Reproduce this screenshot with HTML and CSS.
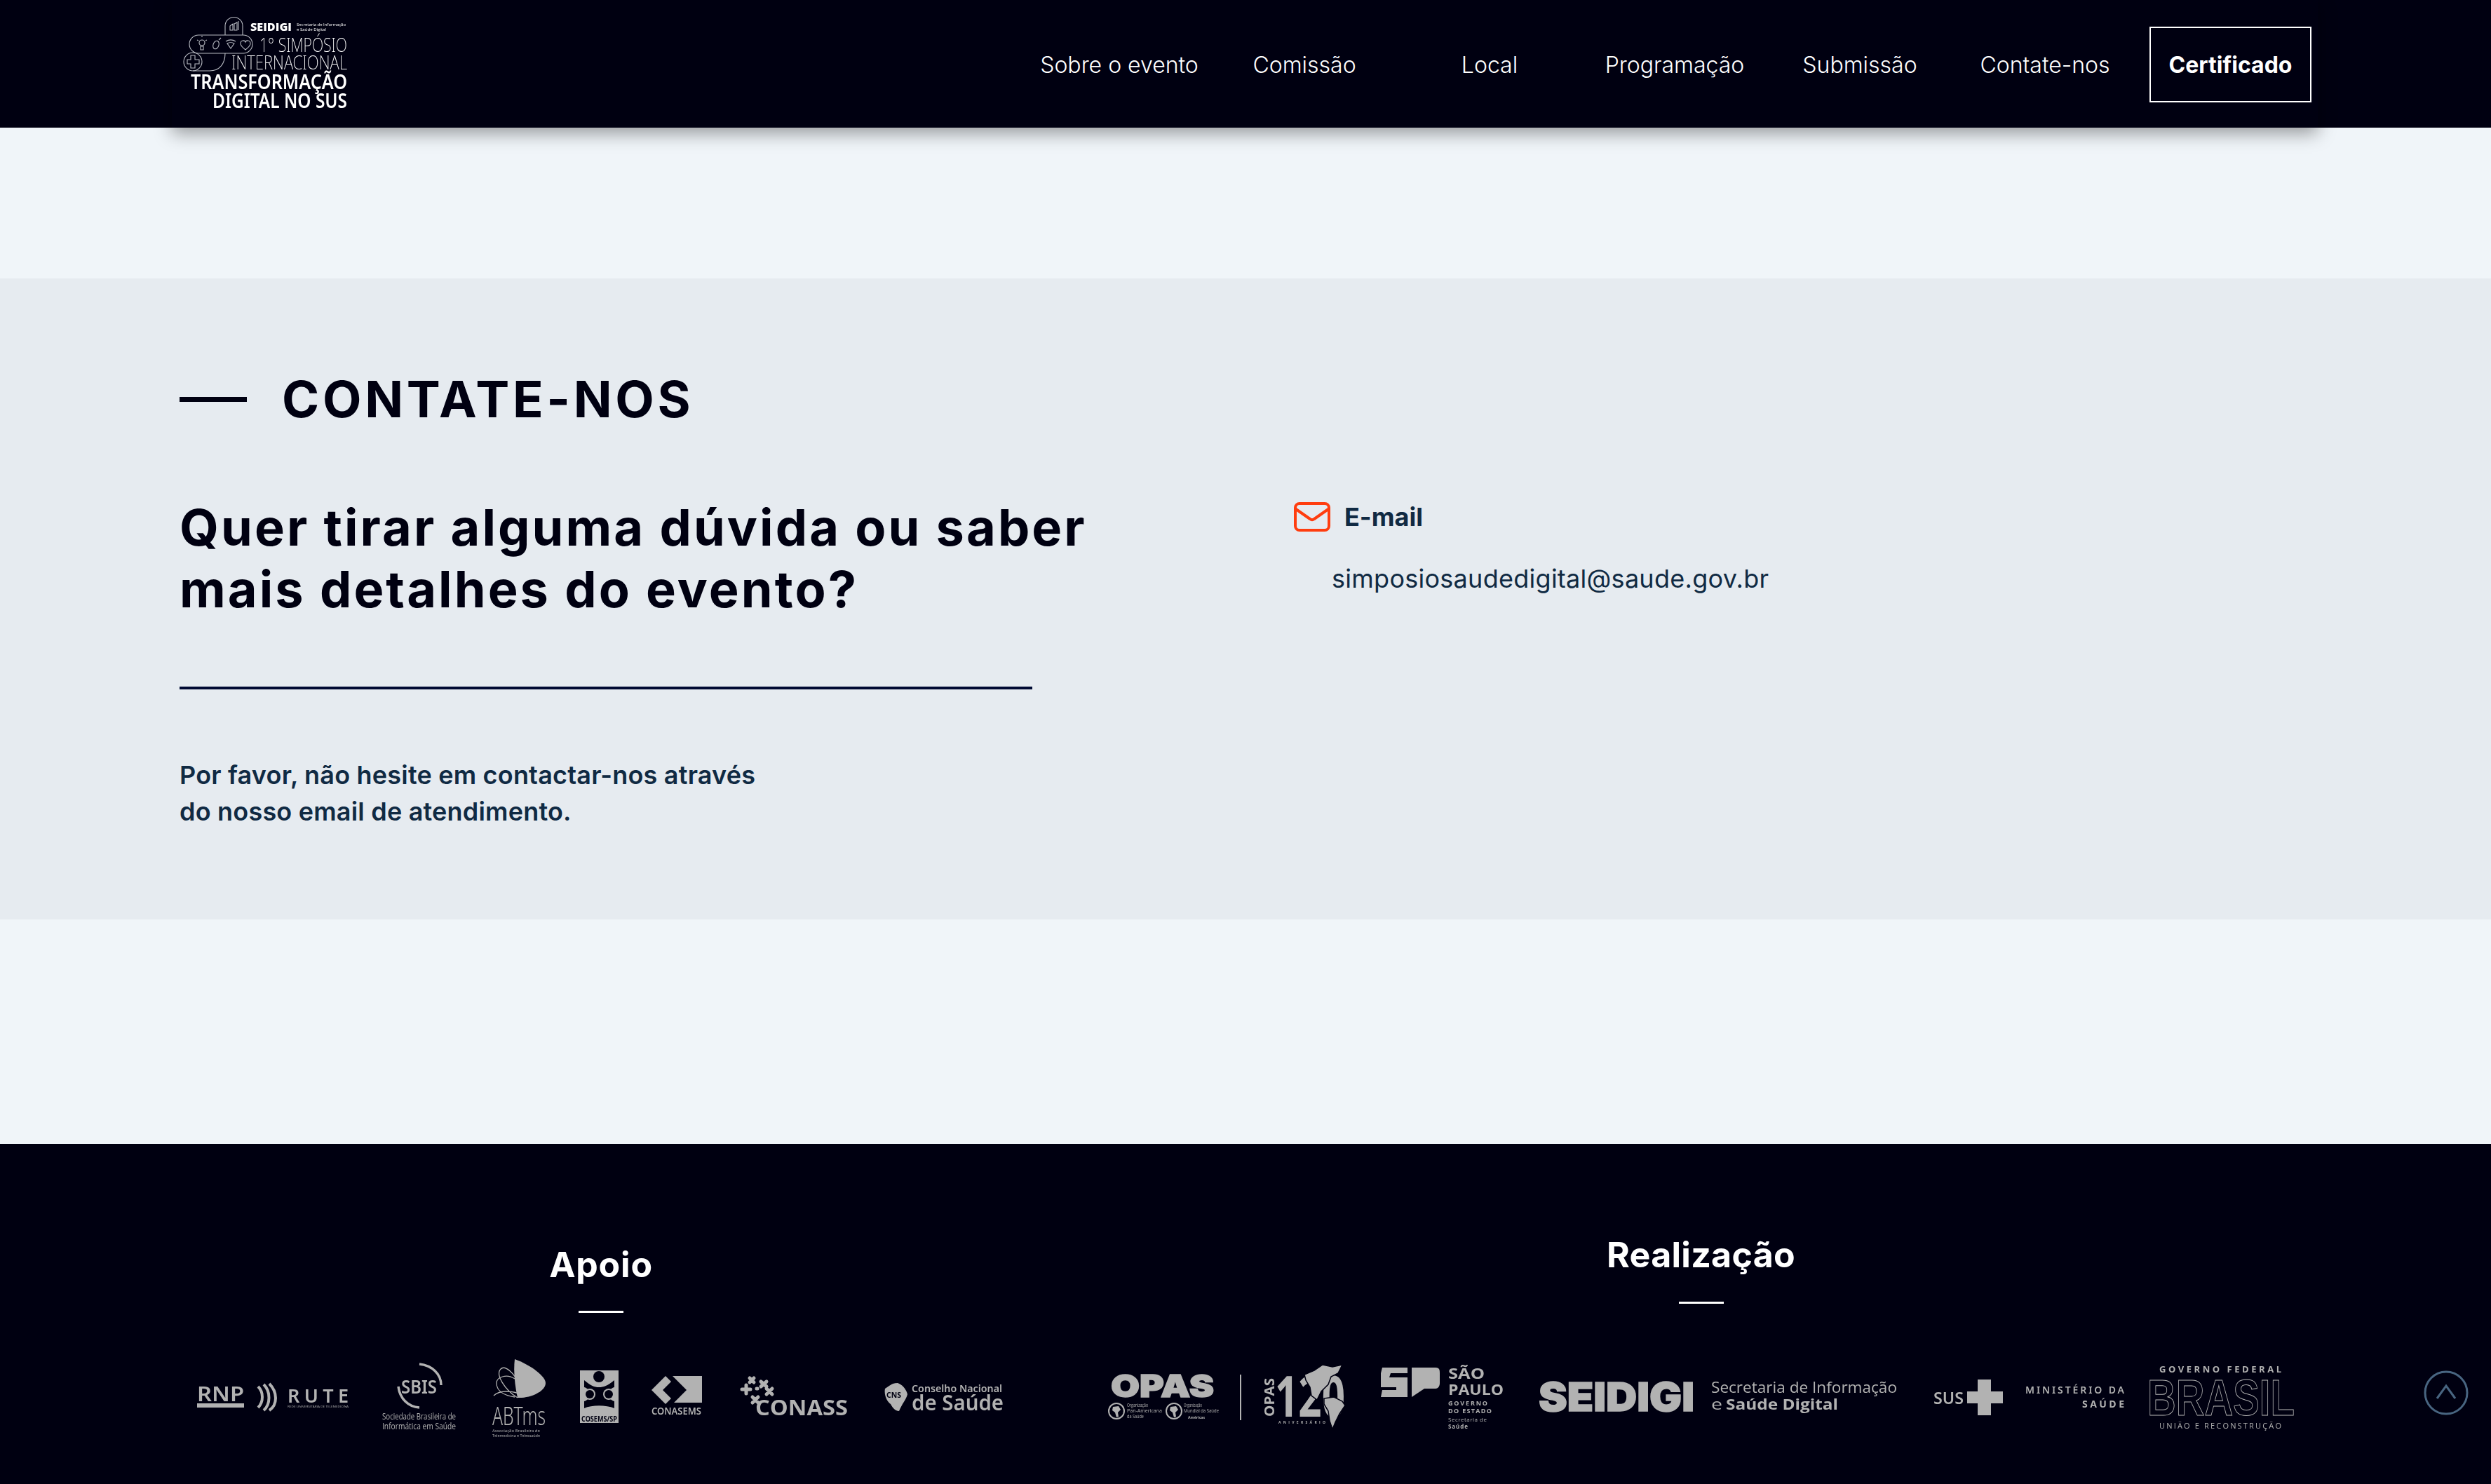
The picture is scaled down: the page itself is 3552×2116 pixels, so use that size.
FILE: index.html
```html
<!DOCTYPE html>
<html lang="pt-BR">
<head>
    <meta charset="UTF-8">
    <meta name="viewport" content="width=device-width, initial-scale=1.0">
    <title>1º Simpósio Internacional - Contate-nos</title>
    <link rel="stylesheet" href="styles.css">
</head>
<body>
    <header class="site-header">
        <div class="header-inner">
            <a class="brand" href="#">
                <svg class="brand-logo" width="240" height="145" viewBox="0 0 240 145">
                    <g fill="none" stroke="#b9bcc4" stroke-width="1.100">
                        <path d="M63 31V18a12.500 12.500 0 0 1 25 0v13"/>
                        <rect x="12" y="31" width="90" height="26" rx="13"/>
                        <circle cx="17" cy="69" r="13"/>
                        <path d="M17 82h24c14 0 22-10 22-25"/>
                        <path d="M70 24v-6l4-3v9zM76 24v-9l4-2v11zM82 24V11"/>
                        <circle cx="30" cy="42" r="4"/>
                        <path d="M28 47h4v5h-4zM23 38l2 1M37 38l-2 1M30 34v-2"/>
                        <ellipse cx="50" cy="45" rx="4" ry="6" transform="rotate(20 50 45)"/>
                        <path d="M54 38l3-3"/>
                        <path d="M64 40c5-3 9-3 14 0M66 43c4-2 6-2 10 0l-5 7z"/>
                        <path d="M85 43c0-5 6-5 7-2 1-3 7-3 7 2 0 4-4 6-7 9-3-3-7-5-7-9z"/>
                        <path d="M14 60h6v6h6v6h-6v6h-6v-6H9v-6h5z"/>
                    </g>
                    <text class="brand-seidigi" x="99" y="25" textLength="59" lengthAdjust="spacingAndGlyphs">SEIDIGI</text>
                    <text class="brand-small" x="165" y="18" textLength="70" lengthAdjust="spacingAndGlyphs">Secretaria de Informação</text>
                    <text class="brand-small" x="165" y="25" textLength="42" lengthAdjust="spacingAndGlyphs">e Saúde Digital</text>
                    <text class="brand-light" x="112" y="55" textLength="125" lengthAdjust="spacingAndGlyphs">1° SIMPÓSIO</text>
                    <text class="brand-light" x="72" y="80" textLength="165" lengthAdjust="spacingAndGlyphs">INTERNACIONAL</text>
                    <text class="brand-bold" x="14" y="108" textLength="223" lengthAdjust="spacingAndGlyphs">TRANSFORMAÇÃO</text>
                    <text class="brand-bold" x="45" y="135" textLength="192" lengthAdjust="spacingAndGlyphs">DIGITAL NO SUS</text>
                </svg>
            </a>
            <nav class="main-nav">
                <a class="nav-link" href="#">Sobre o evento</a>
                <a class="nav-link" href="#">Comissão</a>
                <a class="nav-link" href="#">Local</a>
                <a class="nav-link" href="#">Programação</a>
                <a class="nav-link" href="#">Submissão</a>
                <a class="nav-link" href="#">Contate-nos</a>
                <a class="nav-button" href="#">Certificado</a>
            </nav>
        </div>
    </header>

    <main>
        <section class="contact">
            <h2 class="section-title"><span class="title-dash"></span>CONTATE-NOS</h2>
            <div class="contact-grid">
                <div class="contact-left">
                    <h3 class="contact-question">Quer tirar alguma dúvida ou saber<br>mais detalhes do evento?</h3>
                    <hr class="contact-rule">
                    <p class="contact-text">Por favor, não hesite em contactar-nos através<br>do nosso email de atendimento.</p>
                </div>
                <div class="contact-right">
                    <div class="email-label">
                        <svg class="email-icon" width="52" height="42" viewBox="0 0 52 42" fill="none" stroke="#ff3d0f" stroke-width="4" stroke-linecap="round" stroke-linejoin="round">
                            <rect x="2" y="2" width="48" height="38" rx="6"/>
                            <path d="M3 10l20 14c2 1.500 4 1.500 6 0l20-14"/>
                        </svg>
                        <span>E-mail</span>
                    </div>
                    <p class="email-address">simposiosaudedigital@saude.gov.br</p>
                </div>
            </div>
        </section>
    </main>

    <footer class="site-footer">
        <div class="footer-col">
            <h4 class="footer-title">Apoio</h4>
            <div class="logo-row">
                <svg class="logo" width="216" height="130" viewBox="0 0 216 130">
                    <text class="lg-cond" x="-1" y="68" font-size="29" textLength="67" lengthAdjust="spacingAndGlyphs">RNP</text>
                    <rect x="-1" y="71" width="67" height="6"/>
                    <path class="lg-line" stroke-width="4" d="M86 47c8 8 8 22 0 30M94 44c10 10 10 28 0 37M102 43c12 12 12 30 0 38"/>
                    <text class="lg-cond" x="128" y="70" font-size="27" textLength="87" lengthAdjust="spacing">RUTE</text>
                    <text class="lg-reg" x="128" y="77" font-size="4" textLength="87" lengthAdjust="spacingAndGlyphs">REDE UNIVERSITÁRIA DE TELEMEDICINA</text>
                </svg>
                <svg class="logo" width="110" height="130" viewBox="0 0 110 130">
                    <path class="lg-line" stroke-width="3.500" d="M53 15c18 2 31 14 31 30M23 47c2 17 14 29 30 30"/>
                    <text class="lg-cond" x="27" y="57" font-size="27" textLength="51" lengthAdjust="spacingAndGlyphs">SBIS</text>
                    <text class="lg-reg" x="0" y="94" font-size="12" textLength="105" lengthAdjust="spacingAndGlyphs">Sociedade Brasileira de</text>
                    <text class="lg-reg" x="0" y="108" font-size="12" textLength="105" lengthAdjust="spacingAndGlyphs">Informática em Saúde</text>
                </svg>
                <svg class="logo" width="78" height="130" viewBox="0 0 78 130">
                    <path d="M32 8c22 8 44 24 44 34 0 12-22 22-40 21-4-18-6-38-4-55z"/>
                    <path class="lg-line" stroke-width="1.300" d="M36 63C18 52 4 30 12 22c6-6 20 6 26 22M2 60c8-8 28-8 42 0M32 62c-14-2-26-8-26-20 0-8 14-14 26-6"/>
                    <text class="lg-thin" x="0" y="102" font-size="36" textLength="76" lengthAdjust="spacingAndGlyphs">ABTms</text>
                    <text class="lg-reg" x="0" y="112" font-size="5.500" textLength="68" lengthAdjust="spacingAndGlyphs">Associação Brasileira de</text>
                    <text class="lg-reg" x="0" y="119" font-size="5.500" textLength="68" lengthAdjust="spacingAndGlyphs">Telemedicina e Telessaúde</text>
                </svg>
                <svg class="logo" width="55" height="130" viewBox="0 0 55 130">
                    <rect x="0" y="24" width="55" height="63"/>
                    <rect x="0" y="87" width="55" height="12"/>
                    <path fill="#000011" d="M6 38c10 8 14 10 21 10s12-2 22-10v10c-5 1-8 6-8 10s3 9 8 10v10c-12-5-32-5-43 0V68c5-1 8-6 8-10s-3-9-8-10z"/>
                    <circle cx="27" cy="33" r="8" fill="#000011"/>
                    <circle cx="14" cy="58" r="8" fill="#b2b2b2"/>
                    <circle cx="41" cy="58" r="8" fill="#b2b2b2"/>
                    <circle cx="14" cy="58" r="6" fill="#000011"/>
                    <circle cx="41" cy="58" r="6" fill="#000011"/>
                    <text class="lg-dark" x="2" y="97" font-size="10" textLength="51" lengthAdjust="spacingAndGlyphs">COSEMS/SP</text>
                </svg>
                <svg class="logo" width="72" height="130" viewBox="0 0 72 130">
                    <path d="M0 52l20-20 8 8-12 12 12 12-8 8z"/>
                    <path d="M30 32h42v38H32l10-10 8-8-20-20z"/>
                    <text class="lg-cond" x="0" y="87" font-size="15" textLength="71" lengthAdjust="spacingAndGlyphs">CONASEMS</text>
                </svg>
                <svg class="logo logo-conass" width="154" height="130" viewBox="0 0 154 130">
                    <path stroke="#b2b2b2" stroke-width="5" stroke-linecap="round" d="M14 35l6 6M20 35l-6 6M30 40l8 7M38 40l-8 7M3 51h12M9 45v12M24 50h1M38 50l8 8M46 50l-8 8M18 62l8 8M26 62l-8 8"/>
                    <text class="lg-bold" x="22" y="88" font-size="31" textLength="132" lengthAdjust="spacingAndGlyphs">CONASS</text>
                </svg>
                <svg class="logo" width="176" height="130" viewBox="0 0 176 130">
                    <path d="M6 50c6-4 10-8 18-8 6 2 12 8 14 16-2 8-8 14-12 24-6 0-10-6-12-10-4-2-10-12-8-22z"/>
                    <text class="lg-dark" x="8" y="63" font-size="11" textLength="21" lengthAdjust="spacingAndGlyphs">CNS</text>
                    <text class="lg-cond" x="44" y="55" font-size="15" textLength="129" lengthAdjust="spacingAndGlyphs">Conselho Nacional</text>
                    <text class="lg-cond" x="44" y="81" font-size="30" textLength="131" lengthAdjust="spacingAndGlyphs">de Saúde</text>
                </svg>
            </div>
        </div>
        <div class="footer-col footer-col-right">
            <h4 class="footer-title">Realização</h4>
            <div class="logo-row">
                <svg class="logo" width="342" height="130" viewBox="0 0 342 130">
                    <text class="lg-black" x="6" y="62" font-size="44" textLength="147" lengthAdjust="spacingAndGlyphs">OPAS</text>
                    <circle class="lg-line" stroke-width="2" cx="14" cy="82" r="11"/>
                    <path d="M9 76l8-1 3 5-4 4 1 6-3 1-2-7-4-3z"/>
                    <text class="lg-reg" x="29" y="76" font-size="7" textLength="30" lengthAdjust="spacingAndGlyphs">Organização</text>
                    <text class="lg-reg" x="29" y="84" font-size="7" textLength="50" lengthAdjust="spacingAndGlyphs">Pan-Americana</text>
                    <text class="lg-reg" x="29" y="92" font-size="7" textLength="24" lengthAdjust="spacingAndGlyphs">da Saúde</text>
                    <circle class="lg-line" stroke-width="2" cx="96" cy="82" r="11"/>
                    <path d="M91 76l8-1 3 5-4 4 1 6-3 1-2-7-4-3z"/>
                    <text class="lg-reg" x="110" y="76" font-size="7" textLength="26" lengthAdjust="spacingAndGlyphs">Organização</text>
                    <text class="lg-reg" x="110" y="84" font-size="7" textLength="50" lengthAdjust="spacingAndGlyphs">Mundial da Saúde</text>
                    <text class="lg-bold" x="116" y="93" font-size="6" textLength="24" lengthAdjust="spacingAndGlyphs">Américas</text>
                    <rect x="190" y="30" width="2" height="65"/>
                    <text class="lg-bold" transform="translate(239 90) rotate(-90)" x="0" y="0" font-size="20" textLength="55" lengthAdjust="spacingAndGlyphs">OPAS</text>
                    <text class="lg-bold" x="240" y="90" font-size="80" textLength="100" lengthAdjust="spacingAndGlyphs">120</text>
                    <path class="lg-map" d="M282 30l14-6 12-8 14 3 14-3-6 12-10 5-4 11-10 10-6 12-8-6-2-12-6-10zM310 64l14-2 12 6 4 6-8 12-6 12-4 10-4-12-2-14-6-10z"/>
                    <text class="lg-bold" x="245" y="100" font-size="5" textLength="67" lengthAdjust="spacing">ANIVERSÁRIO</text>
                </svg>
                <svg class="logo" width="180" height="130" viewBox="0 0 180 130">
                    <path d="M4 20h36v8H16l-2 6h26v28H2l2-10h20v-4H2V28z"/>
                    <path d="M46 20h34c6 0 6 4 6 8v14c0 4-2 8-6 8H64l-18 12z"/>
                    <text class="lg-bold" x="98" y="36" font-size="21" textLength="52" lengthAdjust="spacingAndGlyphs">SÃO</text>
                    <text class="lg-bold" x="98" y="59" font-size="21" textLength="79" lengthAdjust="spacingAndGlyphs">PAULO</text>
                    <text class="lg-bold" x="98" y="74" font-size="9" textLength="56" lengthAdjust="spacing">GOVERNO</text>
                    <text class="lg-bold" x="98" y="85" font-size="9" textLength="62" lengthAdjust="spacing">DO ESTADO</text>
                    <text class="lg-reg" x="98" y="97" font-size="8" textLength="55" lengthAdjust="spacing">Secretaria de</text>
                    <text class="lg-bold" x="98" y="107" font-size="8" textLength="28" lengthAdjust="spacing">Saúde</text>
                </svg>
                <svg class="logo" width="516" height="130" viewBox="0 0 516 130">
                    <text class="lg-black" x="0" y="82" font-size="57" textLength="222" lengthAdjust="spacingAndGlyphs">SEIDIGI</text>
                    <text class="lg-reg" x="246" y="56" font-size="21" textLength="265" lengthAdjust="spacingAndGlyphs">Secretaria de Informação</text>
                    <text class="lg-reg" x="246" y="80" font-size="21" textLength="16" lengthAdjust="spacingAndGlyphs">e</text>
                    <text class="lg-bold" x="267" y="80" font-size="21" textLength="160" lengthAdjust="spacingAndGlyphs">Saúde Digital</text>
                </svg>
                <svg class="logo" width="272" height="130" viewBox="0 0 272 130">
                    <text class="lg-cond" x="0" y="72" font-size="24" textLength="43" lengthAdjust="spacingAndGlyphs">SUS</text>
                    <path d="M63 37h19v17h17v17H82v17H63V71H48V54h15z"/>
                    <text class="lg-cond" x="131" y="57" font-size="14" textLength="141" lengthAdjust="spacing">MINISTÉRIO DA</text>
                    <text class="lg-bold" x="212" y="77" font-size="14" textLength="60" lengthAdjust="spacing">SAÚDE</text>
                </svg>
                <svg class="logo logo-brasil" width="212" height="130" viewBox="0 0 212 130">
                    <text class="lg-bold" x="18" y="27" font-size="13" textLength="174" lengthAdjust="spacing">GOVERNO FEDERAL</text>
                    <text class="lg-outline" x="1" y="88" font-size="72" textLength="210" lengthAdjust="spacingAndGlyphs">BRASIL</text>
                    <text class="lg-reg" x="18" y="107" font-size="11" textLength="174" lengthAdjust="spacing">UNIÃO E RECONSTRUÇÃO</text>
                </svg>
            </div>
        </div>
        <a class="scroll-top" href="#">
            <svg width="64" height="64" viewBox="0 0 64 64" fill="none" stroke="#486581" stroke-width="3">
                <circle cx="32" cy="32" r="30"/>
                <path d="M19 40l13-18 13 18"/>
            </svg>
        </a>
    </footer>
</body>
</html>
```

FILE: styles.css
```css
* {
    box-sizing: border-box;
}
body {
    margin: 0;
    background-color: #f0f5f9;
    font-family: Inter, "Liberation Sans", sans-serif;
    color: #102a43;
}
a {
    text-decoration: none;
}

/* header */
.site-header {
    position: relative;
    z-index: 2;
    height: 182px;
    background-color: #000011;
}
.header-inner {
    display: flex;
    justify-content: space-between;
    align-items: center;
    width: 3060px;
    height: 182px;
    margin-left: 245px;
    padding: 0 9px 0 13px;
    background-color: #000011;
    box-shadow: 0 8px 24px rgba(0, 0, 0, 0.38);
}
.brand {
    display: flex;
}
.brand-logo {
    overflow: visible;
    filter: blur(0.4px);
}
.brand-logo text {
    fill: #fff;
}
.brand-seidigi {
    font-family: "Open Sans", sans-serif;
    font-weight: 800;
    font-size: 15px;
}
.brand-small {
    font-family: "Open Sans", sans-serif;
    font-size: 6px;
}
.brand-light {
    font-family: "Noto Sans", sans-serif;
    font-weight: 200;
    font-size: 27px;
}
.brand-bold {
    font-family: "Noto Sans", sans-serif;
    font-weight: 600;
    font-size: 28px;
}
.main-nav {
    display: flex;
    align-items: center;
    margin-top: 2px;
}
.nav-link {
    width: 264px;
    text-align: center;
    font-size: 32px;
    font-weight: 300;
    color: #fff;
}
.nav-button {
    display: flex;
    align-items: center;
    justify-content: center;
    width: 231px;
    height: 108px;
    margin-left: 17px;
    border: 2px solid #fff;
    font-size: 32px;
    font-weight: 700;
    color: #fff;
}

/* contact */
main {
    padding: 215px 0 320px;
}
.contact {
    height: 914px;
    padding: 132px 0 0 256px;
    background-color: #e6ebf0;
}
.section-title {
    display: flex;
    align-items: center;
    gap: 50px;
    margin: 0;
    font-size: 72px;
    line-height: 80px;
    font-weight: 700;
    letter-spacing: 4.7px;
    color: #000011;
}
.title-dash {
    width: 96px;
    height: 7px;
    background-color: #000011;
}
.contact-grid {
    display: flex;
    margin-top: 99px;
}
.contact-left {
    width: 1589px;
}
.contact-question {
    margin: 0;
    font-size: 72px;
    line-height: 88px;
    font-weight: 700;
    letter-spacing: 3.1px;
    color: #000011;
}
.contact-rule {
    width: 1216px;
    height: 4px;
    margin: 95px 0 0;
    border: 0;
    background-color: #000a33;
}
.contact-text {
    margin: 96px 0 0;
    font-size: 36px;
    line-height: 52px;
    font-weight: 600;
    letter-spacing: 0.2px;
}
.contact-right {
    padding-top: 7px;
}
.email-label {
    display: flex;
    align-items: center;
    gap: 20px;
    font-size: 36px;
    font-weight: 700;
}
.email-address {
    margin: 44px 0 0 54px;
    font-size: 36px;
    line-height: 44px;
    letter-spacing: 0.27px;
}

/* footer */
.site-footer {
    position: relative;
    display: flex;
    gap: 146px;
    height: 485px;
    padding-left: 282px;
    background-color: #000011;
}
.footer-col {
    display: flex;
    flex-direction: column;
    align-items: center;
}
.footer-title {
    position: relative;
    margin: 0;
    padding: 138px 0 0;
    height: 299px;
    font-size: 50px;
    line-height: 68px;
    font-weight: 700;
    letter-spacing: 0.8px;
    color: #fff;
}
.footer-title::after {
    content: "";
    position: absolute;
    left: 50%;
    top: 238px;
    width: 64px;
    height: 3px;
    margin-left: -32px;
    background-color: #fff;
}
.footer-col-right .footer-title {
    padding-top: 124px;
    letter-spacing: 0.3px;
}
.footer-col-right .footer-title::after {
    top: 225px;
}
.logo-row {
    display: flex;
    gap: 47px;
}
.logo {
    fill: #b2b2b2;
    filter: blur(0.5px);
    overflow: visible;
}
.logo-conass {
    margin-left: 7px;
}
.logo-brasil {
    margin-left: -15px;
}
.lg-line {
    fill: none;
    stroke: #b2b2b2;
}
.lg-map {
    stroke: #000011;
    stroke-width: 1.500px;
}
.lg-reg {
    font-family: "Open Sans", sans-serif;
}
.lg-cond {
    font-family: "Noto Sans", sans-serif;
    font-weight: 600;
}
.lg-thin {
    font-family: "Noto Sans", sans-serif;
    font-weight: 300;
}
.lg-bold {
    font-family: "Open Sans", sans-serif;
    font-weight: 700;
}
.lg-black {
    font-family: Inter, sans-serif;
    font-weight: 900;
    stroke: #b2b2b2;
    stroke-width: 1.500px;
}
.lg-dark {
    font-family: "Noto Sans", sans-serif;
    font-weight: 700;
    fill: #000011;
}
.lg-outline {
    font-family: "Liberation Sans", sans-serif;
    font-weight: 700;
    fill: none;
    stroke: #b2b2b2;
    stroke-width: 1px;
}
.scroll-top {
    position: absolute;
    left: 3456px;
    top: 323px;
    display: flex;
}
```
